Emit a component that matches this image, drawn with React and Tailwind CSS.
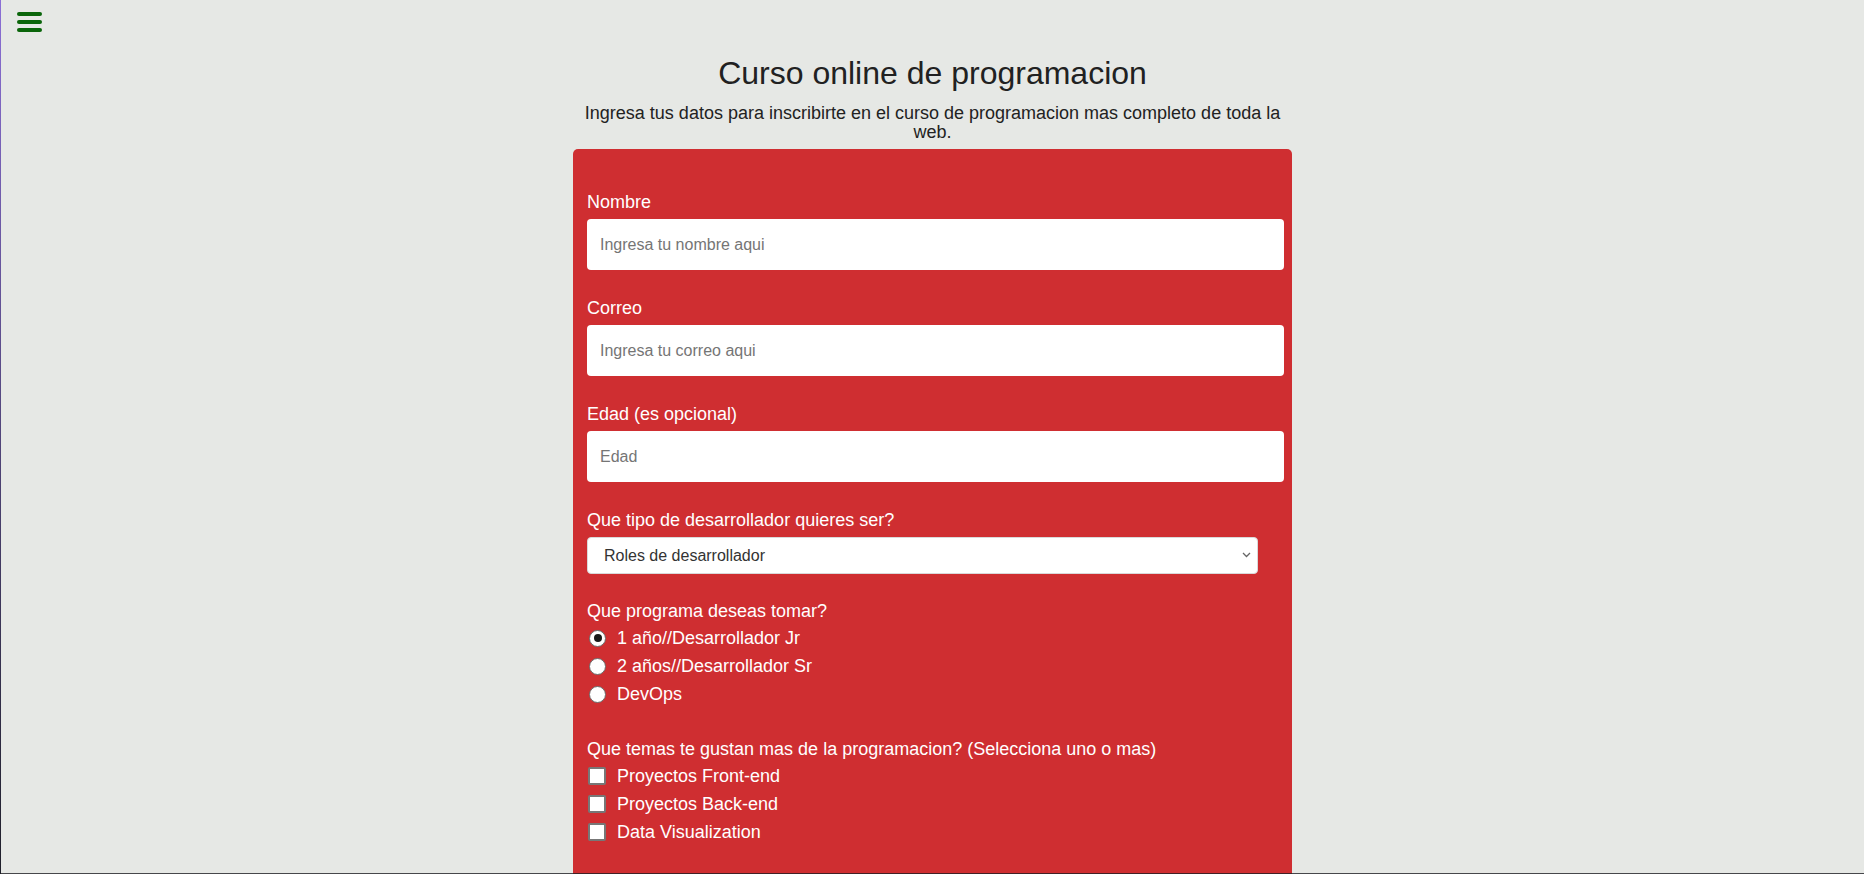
import { useState } from 'react'

const font = { fontFamily: '"Liberation Sans", Arial, sans-serif' }

const inputClass =
  'w-[697px] h-[51px] px-[13px] bg-white rounded-[4px] text-[16px] text-[#333] placeholder:text-[#757575] outline-none'

function Field({ label, children, className = '' }) {
  return (
    <div className={className}>
      <label className="block text-[18px] leading-[22px] text-white">{label}</label>
      {children}
    </div>
  )
}

function Radio({ checked, label, onClick }) {
  return (
    <div onClick={onClick} className="flex items-center h-[28px] cursor-pointer">
      <span className="ml-[2px] w-[17px] h-[17px] rounded-full bg-white border border-[#6b6b6b] flex items-center justify-center">
        {checked && <span className="w-[8px] h-[8px] rounded-full bg-[#1a1a1a]" />}
      </span>
      <span className="ml-[11px] text-[18px] text-white">{label}</span>
    </div>
  )
}

function Check({ checked, label, onClick }) {
  return (
    <div onClick={onClick} className="flex items-center h-[28px] cursor-pointer">
      <span className="ml-[1px] w-[18px] h-[18px] rounded-[2px] bg-white border-2 border-[#777] flex items-center justify-center text-[12px] leading-none text-[#222]">
        {checked ? '✓' : ''}
      </span>
      <span className="ml-[11px] text-[18px] text-white">{label}</span>
    </div>
  )
}

export default function App() {
  const [programa, setPrograma] = useState(0)
  const [temas, setTemas] = useState([])

  function toggleTema(i) {
    setTemas(prev => (prev.includes(i) ? prev.filter(t => t !== i) : [...prev, i]))
  }

  return (
    <div className="relative flex w-[1864px] h-[874px] overflow-hidden bg-[#e6e8e5]" style={font}>
      {/* window edge */}
      <div className="w-px bg-gradient-to-b from-[#8b6fd6] to-[#1f1f2a]" />

      {/* menu toggle */}
      <button className="absolute left-[17px] top-[12px] flex flex-col gap-[4px]">
        <span className="block w-[25px] h-[4px] rounded-full bg-[#0a650a]" />
        <span className="block w-[25px] h-[4px] rounded-full bg-[#0a650a]" />
        <span className="block w-[25px] h-[4px] rounded-full bg-[#0a650a]" />
      </button>

      <main className="flex-1 flex flex-col items-center pt-[55px]">
        <h1 className="text-[32px] leading-[36px] text-[#212121]">Curso online de programacion</h1>
        <p className="w-[719px] mt-[13px] text-center text-[18px] leading-[19px] text-[#222]">
          Ingresa tus datos para inscribirte en el curso de programacion mas completo de toda la web.
        </p>

        <form className="w-[719px] mt-[7px] bg-[#cf2e31] rounded-[5px] pl-[14px] pt-[42px] pb-[60px]">
          <Field label="Nombre">
            <input type="text" placeholder="Ingresa tu nombre aqui" className={inputClass + ' mt-[6px]'} />
          </Field>
          <Field label="Correo" className="mt-[27px]">
            <input type="email" placeholder="Ingresa tu correo aqui" className={inputClass + ' mt-[6px]'} />
          </Field>
          <Field label="Edad (es opcional)" className="mt-[27px]">
            <input type="number" placeholder="Edad" className={inputClass + ' mt-[6px]'} />
          </Field>

          <Field label="Que tipo de desarrollador quieres ser?" className="mt-[27px]">
            <div className="relative mt-[6px] w-[671px]">
              <select className="w-full h-[37px] pl-[16px] appearance-none bg-white border border-[#d9d9d9] rounded-[4px] text-[16px] text-[#333] outline-none">
                <option>Roles de desarrollador</option>
                <option>Front-end</option>
                <option>Back-end</option>
                <option>Full-stack</option>
              </select>
              <svg className="absolute right-[7px] top-[15px] w-[9px] h-[6px]" viewBox="0 0 9 6" fill="none">
                <path d="M1 1l3.5 3.5L8 1" stroke="#666" strokeWidth="1.3" />
              </svg>
            </div>
          </Field>

          <Field label="Que programa deseas tomar?" className="mt-[26px]">
            <div className="mt-[2px]">
              {['1 año//Desarrollador Jr', '2 años//Desarrollador Sr', 'DevOps'].map((p, i) => (
                <Radio key={p} label={p} checked={programa === i} onClick={() => setPrograma(i)} />
              ))}
            </div>
          </Field>

          <Field label="Que temas te gustan mas de la programacion? (Selecciona uno o mas)" className="mt-[30px]">
            <div className="mt-[2px]">
              {['Proyectos Front-end', 'Proyectos Back-end', 'Data Visualization'].map((t, i) => (
                <Check key={t} label={t} checked={temas.includes(i)} onClick={() => toggleTema(i)} />
              ))}
            </div>
          </Field>

          <button type="submit" className="ml-[111px] mt-[29px] px-4 py-2 rounded-[4px] bg-[#e8702a] text-white text-[16px]">
            Enviar
          </button>
        </form>
      </main>

      {/* bottom window edge */}
      <div className="absolute inset-x-0 bottom-0 h-px bg-[#1e1e24]/80" />
    </div>
  )
}
